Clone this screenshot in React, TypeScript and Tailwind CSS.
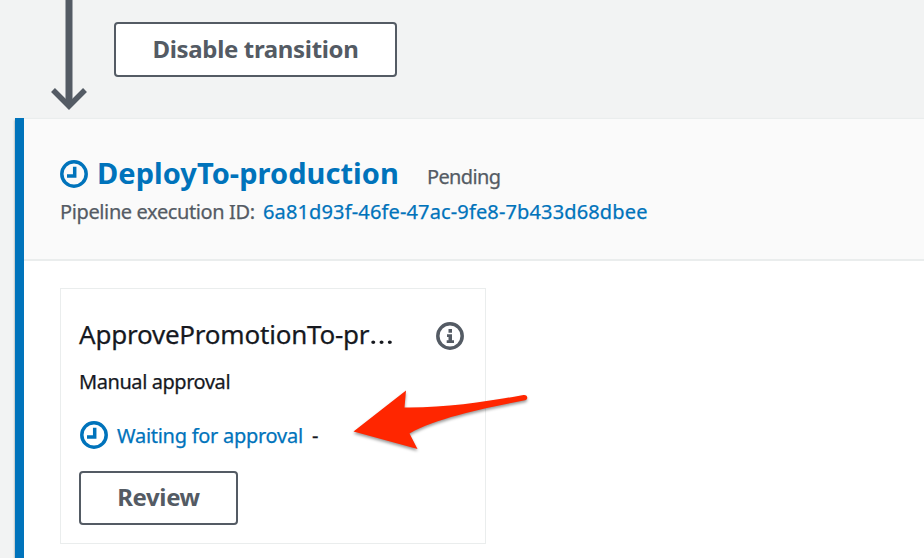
import React from "react";

const sans = "font-['Noto_Sans','Open_Sans',sans-serif]";

function ClockIcon({ className = "" }: { className?: string }) {
  return (
    <svg width="28" height="28" viewBox="0 0 28 28" fill="none" stroke="#0073bb" className={`block shrink-0 ${className}`}>
      <circle cx="14" cy="14" r="12.2" strokeWidth="3.500" />
      <path d="M14.7 6.700v9.400H7" strokeWidth="3.500" />
    </svg>
  );
}

function InfoIcon() {
  return (
    <svg width="28" height="28" viewBox="0 0 28 28" fill="none" className="relative top-px block shrink-0">
      <circle cx="14" cy="14" r="12.2" stroke="#545b64" strokeWidth="3.500" />
      <path d="M12.500 7h3.500v3.700h-3.500zM11 12.300h5v6h2V21h-7.300v-2.700H12.500V15H11z" fill="#545b64" />
    </svg>
  );
}

function Button({ className, children }: { className: string; children: React.ReactNode }) {
  return (
    <button
      className={`flex items-center justify-center rounded-[4px] border-2 border-[#545b64] bg-white pb-[2px] text-2xl font-bold whitespace-nowrap text-[#545b64] ${className}`}
    >
      {children}
    </button>
  );
}

function TransitionArrow() {
  return (
    <svg width="38" height="110" viewBox="0 0 38 110" fill="none" stroke="#545b64" className="ml-[50px] block shrink-0">
      <path d="M19 0v104" strokeWidth="7" />
      <path d="M3 90l16 16 16-16" strokeWidth="5.500" />
    </svg>
  );
}

export default function App() {
  return (
    <div className={`relative h-[558px] w-[924px] overflow-hidden bg-[#f2f3f3] ${sans}`}>
      <div className="flex h-[118px] items-start">
        <TransitionArrow />
        <Button className="mt-[22px] ml-[26px] h-[55px] w-[283px] tracking-[-0.34px]">Disable transition</Button>
      </div>

      <section className="ml-[15px] h-[440px] border-l-[9px] border-[#0073bb] bg-white shadow-[0_2px_2px_rgba(0,28,36,0.5)]">
        <header className="h-[143px] border-t border-b-2 border-[#eaeded] bg-[#fafafa] pt-[35px] pl-[36px]">
          <div className="flex h-[40px] items-center whitespace-nowrap">
            <ClockIcon />
            <h2 className="ml-[9px] w-[330px] pb-[2px] text-[29px] leading-[38px] font-bold tracking-[0.05px] text-[#0073bb]">
              DeployTo-production
            </h2>
            <span className="pt-[6px] text-[20px] leading-[34px] tracking-[-0.65px] text-[#545b64] [-webkit-text-stroke:0.25px]">
              Pending
            </span>
          </div>
          <p className="flex h-[36px] text-[20px] leading-[36px] whitespace-nowrap [-webkit-text-stroke:0.25px]">
            <span className="w-[203px] tracking-[-0.38px] text-[#545b64]">Pipeline execution ID:</span>
            <a className="tracking-[0.14px] text-[#0073bb]">6a81d93f-46fe-47ac-9fe8-7b433d68dbee</a>
          </p>
        </header>

        <article className="mt-[27px] ml-[36px] h-[256px] w-[426px] border border-[#eaeded] pt-[28px] pl-[18px] text-[#16191f]">
          <div className="flex h-[36px] items-center whitespace-nowrap">
            <h3 className="w-[357px] pb-[2px] text-[26px] leading-[34px] tracking-[-0.22px] [-webkit-text-stroke:0.25px]">
              ApprovePromotionTo-pr
              <span className="inline-block w-[26px] origin-left scale-x-[1.220] [-webkit-text-stroke:0px]">…</span>
            </h3>
            <InfoIcon />
          </div>
          <p className="mt-[14px] h-[30px] text-[20px] leading-[30px] tracking-[-0.43px] whitespace-nowrap [-webkit-text-stroke:0.25px]">
            Manual approval
          </p>
          <div className="mt-[23px] flex h-[30px] items-center text-[20px] leading-[30px] whitespace-nowrap [-webkit-text-stroke:0.25px]">
            <ClockIcon className="ml-px" />
            <a className="ml-[9px] w-[195px] pt-[2px] tracking-[-0.27px] text-[#0073bb]">Waiting for approval</a>
            <span className="pt-[2px]">-</span>
          </div>
          <Button className="mt-[21px] h-[54px] w-[159px] tracking-[-0.4px]">Review</Button>
        </article>
      </section>

      <svg
        width="190"
        height="76"
        viewBox="346 382 190 76"
        className="absolute top-[382px] left-[346px] drop-shadow-[0_2px_1.500px_rgba(0,0,0,0.4)]"
      >
        <path
          d="M353.500 431.500L406 390.500L404.500 407.500C445 408 485 402 523.500 395C528 394.500 528.500 399.500 525 400.300C485 408 437 418 409.500 433.500L417.500 449Z"
          fill="#ff2600"
        />
      </svg>
    </div>
  );
}
